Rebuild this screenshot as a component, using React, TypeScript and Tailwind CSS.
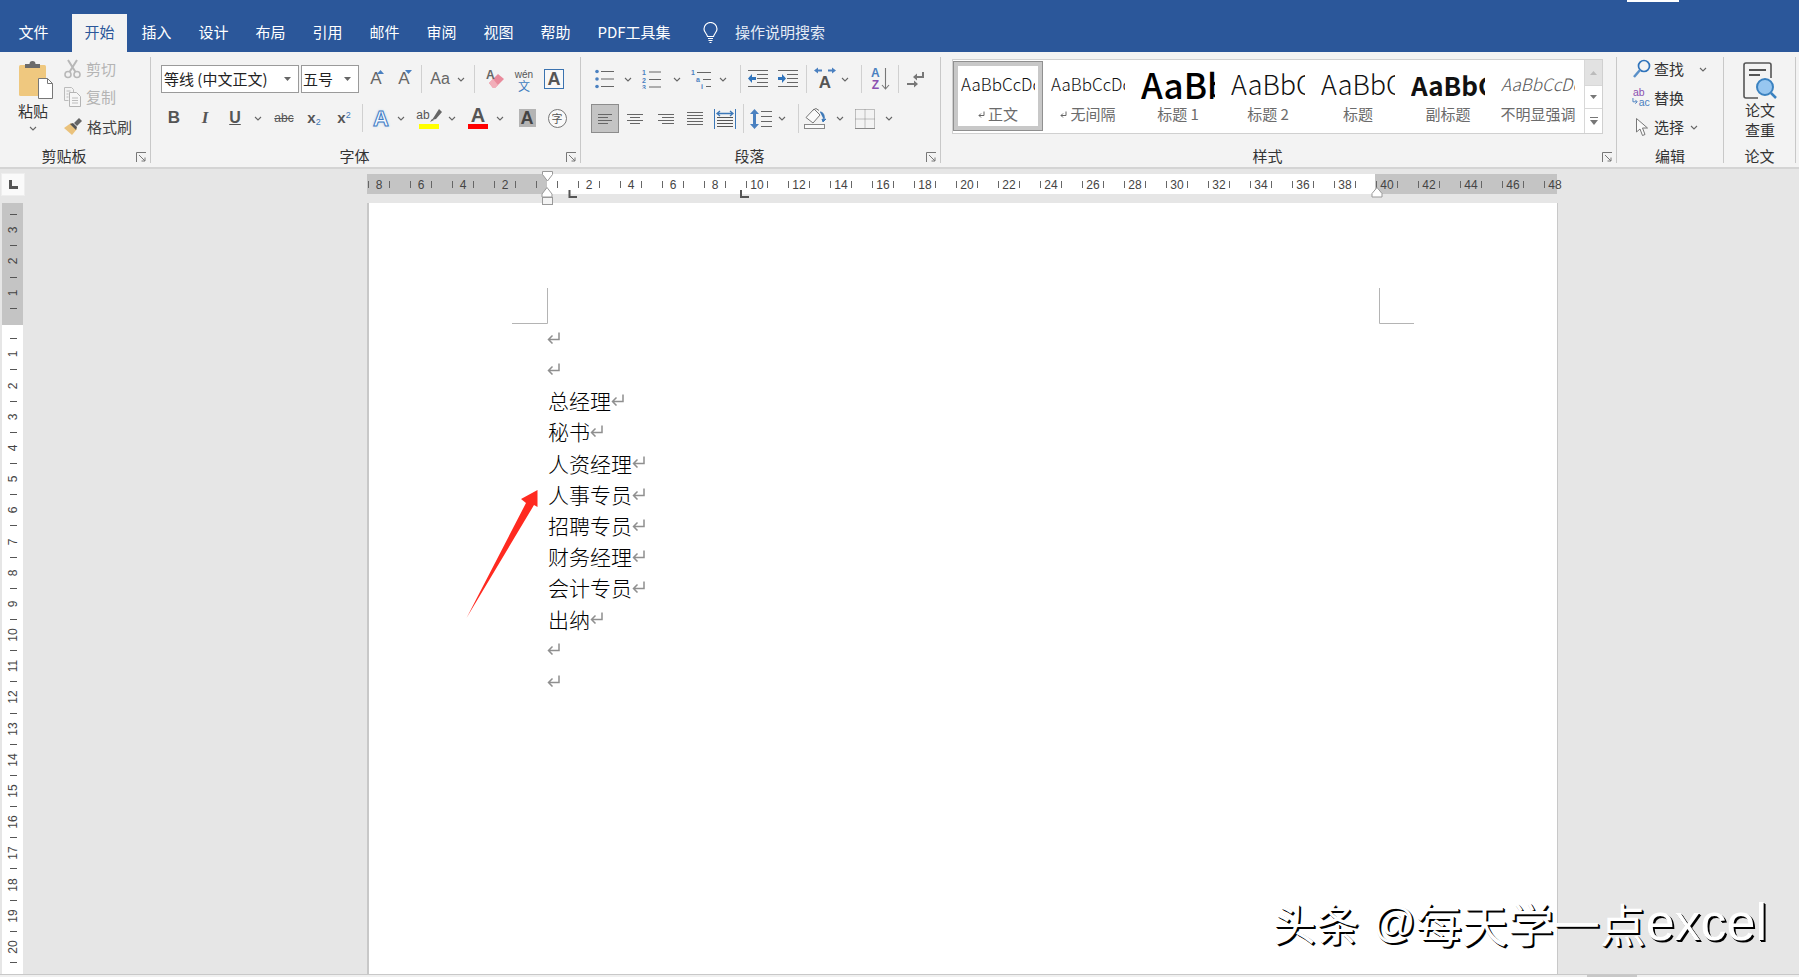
import React from "react";

const UI = "[font-family:'Noto_Sans_CJK_SC','Liberation_Sans',sans-serif]";
const AR = "[font-family:'Liberation_Sans','Noto_Sans_CJK_SC',sans-serif]";
const BLUE = "#4a80c0";

const Chev = ({ c = "#666" }: { c?: string }) => (
  <svg width="8" height="5" viewBox="0 0 8 5" className="shrink-0">
    <path d="M1 1l3 3 3-3" fill="none" stroke={c} strokeWidth="1.1" />
  </svg>
);
const Sep = () => <div className="w-px self-stretch bg-[#d0d0d0] shrink-0" />;
const Slot = ({ w, children }: { w: "s22" | "s24"; children?: React.ReactNode }) => (
  <div className={w === "s22" ? "w-[22px] h-[24px] flex items-center justify-center shrink-0" : "w-[24px] h-[24px] flex items-center justify-center shrink-0"}>
    {children}
  </div>
);
const Launcher = () => (
  <svg width="11" height="11" viewBox="0 0 11 11" className="absolute right-[3px] bottom-0">
    <path d="M.5 10V.5H10M3 3l6 6M9 5.5V9H5.5" fill="none" stroke="#777" strokeWidth="1" />
  </svg>
);
const Lines = ({ rows }: { rows: [number, number, number][] }) => (
  <svg width="22" height="18" viewBox="0 0 22 18">
    {rows.map((r, i) => (
      <path key={i} d={`M${r[0]} ${r[2]}.5H${r[1]}`} stroke="#666" strokeWidth="1" />
    ))}
  </svg>
);
const Ret = ({ c = "#8f8f8f" }: { c?: string }) => (
  <svg width="13" height="12" viewBox="0 0 13 12" className="shrink-0">
    <path d="M12 .5V7.500H1.500M5.500 3.500L1.500 7.500 5.500 11.500" fill="none" stroke={c} strokeWidth="1.5" />
  </svg>
);
const SmallRet = () => (
  <svg width="7" height="7" viewBox="0 0 7 7" className="shrink-0">
    <path d="M6 .5V4.500H1M3 2.500L1 4.500 3 6.500" fill="none" stroke="#666" strokeWidth="1" />
  </svg>
);

const Paste = () => (
  <svg width="34" height="38" viewBox="0 0 34 38">
    <rect x="0" y="4" width="27" height="31" rx="1.5" fill="#efc87f" />
    <path d="M6 7V3h4.500a3 3 0 0 1 6 0H21v4z" fill="#6b6b6b" />
    <path d="M19.500 17.500h9l5 5v15h-14z" fill="#fff" stroke="#777" />
    <path d="M28.500 17.500v5h5" fill="none" stroke="#777" />
  </svg>
);
const Scissors = () => (
  <svg width="17" height="20" viewBox="0 0 17 20">
    <circle cx="4" cy="15.500" r="3" fill="none" stroke="#b8b8b8" strokeWidth="1.6" />
    <circle cx="13" cy="15.500" r="3" fill="none" stroke="#b8b8b8" strokeWidth="1.6" />
    <path d="M5.500 13L13 1M11.500 13L4 1" stroke="#b8b8b8" strokeWidth="2" />
  </svg>
);
const Copy = () => (
  <svg width="17" height="20" viewBox="0 0 17 20">
    <path d="M.5.5h7l2 2v3M.5.5v13h4" fill="none" stroke="#bcbcbc" />
    <path d="M5.500 5.500h7l4 4v10h-11z" fill="#f6f6f6" stroke="#b4b4b4" />
    <path d="M8 11h6M8 13.500h6M8 16h6M2.500 4h4M2.500 7h2M2.500 10h2" stroke="#bcbcbc" />
  </svg>
);
const Brush = () => (
  <svg width="18" height="18" viewBox="0 0 18 18">
    <path d="M7 5l6 6-5 6-8-7z" fill="#eac27c" />
    <path d="M6 6l3-1 4 4-1 3z" fill="#555" />
    <path d="M10 5l5-5 3 3-5 5z" fill="#666" />
  </svg>
);
const GrowA = ({ up }: { up: boolean }) => (
  <div className="relative w-[24px] h-[24px] flex items-end justify-center pb-[2px]">
    <span className={`${AR} text-[17px] leading-[20px] text-[#666]`}>A</span>
    <svg width="7" height="4" viewBox="0 0 7 4" className="absolute top-[3px] right-[4px]">
      {up ? <path d="M0 4L3.500 0 7 4z" fill={BLUE} /> : <path d="M0 0L3.500 4 7 0z" fill={BLUE} />}
    </svg>
  </div>
);
const Eraser = () => (
  <div className="relative w-[22px] h-[24px]">
    <svg width="16" height="16" viewBox="0 0 16 16" className="absolute left-[6px] top-[6px]">
      <path d="M1 10L10 1l6 5-9 9H5z" fill="#e98a9b" />
      <path d="M1 10l4 5h2l3-3-5-6z" fill="#f2aeb9" />
    </svg>
    <span className={`${AR} absolute left-[4px] top-[2px] text-[12px] leading-[12px] font-bold text-[#666]`}>A</span>
  </div>
);
const Wen = () => (
  <div className="w-[22px] h-[24px] flex flex-col items-center justify-start pt-[3px]">
    <span className={`${AR} text-[10px] leading-[9px] text-[#555]`}>wén</span>
    <span className={`${UI} text-[12px] leading-[13px] text-[#3f7cbf]`}>文</span>
  </div>
);
const BoxA = () => (
  <div className="w-[20px] h-[20px] border border-[#3b73b0] flex items-center justify-center bg-[#f8f8f8]">
    <span className={`${AR} text-[18px] leading-[18px] font-bold text-[#555]`}>A</span>
  </div>
);
const Bul = () => (
  <svg width="22" height="20" viewBox="0 0 22 20">
    {[2.5, 10, 17.5].map((y) => (
      <g key={y}>
        <circle cx="3" cy={y} r="1.8" fill={BLUE} />
        <path d={`M7 ${y}H20`} stroke="#666" strokeWidth="1" />
      </g>
    ))}
  </svg>
);
const Num = () => (
  <svg width="22" height="20" viewBox="0 0 22 20">
    {["1", "2", "3"].map((t, i) => (
      <g key={t}>
        <text x="1" y={6 + i * 7.5} fontSize="7" fontWeight="700" fill={BLUE} fontFamily="Liberation Sans">{t}</text>
        <path d={`M8 ${3 + i * 7.5}H20`} stroke="#666" strokeWidth="1" />
      </g>
    ))}
  </svg>
);
const Multi = () => (
  <svg width="22" height="20" viewBox="0 0 22 20">
    <text x="0" y="6" fontSize="7" fontWeight="700" fill={BLUE} fontFamily="Liberation Sans">1</text>
    <text x="5" y="13" fontSize="7" fontWeight="700" fill={BLUE} fontFamily="Liberation Sans">a</text>
    <text x="10" y="20" fontSize="7" fontWeight="700" fill={BLUE} fontFamily="Liberation Sans">i</text>
    <path d="M6 3.500H20M12 10.500H20M15 17.500H20" stroke="#666" strokeWidth="1" />
  </svg>
);
const Indent = ({ inc }: { inc: boolean }) => (
  <svg width="22" height="18" viewBox="0 0 22 18">
    <path d="M1 .5H21M10 4.500H21M10 8.500H21M10 12.500H21M1 16.500H21" stroke="#666" strokeWidth="1" />
    {inc ? (
      <path d="M1 7h4V4l4 4.500-4 4.500V10H1z" fill="#2f73bb" />
    ) : (
      <path d="M9 7H5V4L1 8.500 5 13V10h4z" fill="#2f73bb" />
    )}
  </svg>
);
const TextDir = () => (
  <div className="relative w-[24px] h-[24px] flex items-end justify-center">
    <span className={`${AR} text-[17px] leading-[17px] font-bold text-[#555]`}>A</span>
    <svg width="24" height="7" viewBox="0 0 24 7" className="absolute top-0 left-0">
      <path d="M1 3.500L5 .5v2h4v2H5v2zM23 3.500L19 .5v2h-4v2h4v2z" fill={BLUE} />
    </svg>
  </div>
);
const Sort = () => (
  <div className="relative w-[22px] h-[24px] flex">
    <div className={`${AR} flex flex-col items-center ml-[2px] text-[12px] leading-[12px] font-bold`}>
      <span className="text-[#4a80c0]">A</span>
      <span className="text-[#8a50b0]">Z</span>
    </div>
    <svg width="9" height="24" viewBox="0 0 9 24" className="ml-[1px]">
      <path d="M4.500 1V22M1 18l3.500 4L8 18" fill="none" stroke="#777" strokeWidth="1.1" />
    </svg>
  </div>
);
const ParaMarks = () => (
  <svg width="18" height="17" viewBox="0 0 18 17">
    <path d="M16 1v5H8" fill="none" stroke="#777" strokeWidth="2" />
    <path d="M10 2.500L6 6l4 3.500zM7 12V9.500L11 13l-4 3.500V14H0v-2z" fill="#777" />
  </svg>
);
const LineSp = () => (
  <svg width="22" height="20" viewBox="0 0 22 20">
    <path d="M4.500 0L9 5H6v10h3l-4.500 5L0 15h3V5H0z" fill={BLUE} />
    <path d="M11 2.500H22M11 7.500H22M11 12.500H22M11 17.500H22" stroke="#666" />
  </svg>
);
const Distribute = () => (
  <svg width="22" height="20" viewBox="0 0 22 20">
    <path d="M.5 0V20M21.500 0V20" stroke="#3c78b8" />
    <path d="M3 4.500h16M6 2L3 4.500 6 7M16 2l3 2.500L16 7" fill="none" stroke="#3c78b8" strokeWidth="1.3" />
    <path d="M3 8.500H19M3 11.500H19M3 14.500H19M3 17.500H19" stroke="#555" />
  </svg>
);
const Fill = () => (
  <svg width="24" height="21" viewBox="0 0 24 21">
    <path d="M10 1L2 9.500 9 15l7-8z" fill="#fafafa" stroke="#777" />
    <path d="M9 2l3-1.500 3 2" fill="none" stroke="#777" />
    <path d="M16 4c3 0 5 3 4 8l-2-1 1 3 3-3-2 1" fill="#3c78b8" stroke="#3c78b8" />
    <rect x=".5" y="16.500" width="20" height="4" fill="#fafafa" stroke="#888" />
  </svg>
);
const Borders = () => (
  <svg width="20" height="20" viewBox="0 0 20 20">
    <path d="M.5.5H19.500V19.500M.5.5V19.500M10 .5V19.500M.5 10H19.500" fill="none" stroke="#888" strokeDasharray="1 1" />
    <path d="M0 19.500H20" stroke="#888" />
  </svg>
);
const SearchI = () => (
  <svg width="18" height="20" viewBox="0 0 18 20">
    <circle cx="11" cy="7" r="5.500" fill="none" stroke="#2f73bb" strokeWidth="1.7" />
    <path d="M7 11L1 18" stroke="#5a90c8" strokeWidth="2.500" />
  </svg>
);
const Replace = () => (
  <svg width="21" height="20" viewBox="0 0 21 20">
    <text x="1" y="8" fontSize="11" fill="#8a50b0" fontFamily="Liberation Sans">ab</text>
    <text x="7" y="18" fontSize="11" fill={BLUE} fontFamily="Liberation Sans">ac</text>
    <path d="M1 10v4h4M3.500 12L5.500 14 3.500 16" fill="none" stroke={BLUE} />
  </svg>
);
const Cursor = () => (
  <svg width="12" height="19" viewBox="0 0 12 19">
    <path d="M.5.5V14l3.500-3 2.500 6.500 2.500-1L6.500 10H11.500z" fill="#fafafa" stroke="#777" />
  </svg>
);
const Paper = () => (
  <svg width="34" height="37" viewBox="0 0 34 37">
    <path d="M28 16V3a2 2 0 0 0-2-2H3a2 2 0 0 0-2 2v31a2 2 0 0 0 2 2h12" fill="none" stroke="#555" strokeWidth="1.6" />
    <path d="M6 8h17M6 13h11" stroke="#555" strokeWidth="2" />
    <circle cx="22" cy="25" r="8" fill="#97c6f0" stroke="#3b82c0" strokeWidth="2" />
    <path d="M28 31l5 5" stroke="#3b82c0" strokeWidth="2.500" />
  </svg>
);
const Bulb = () => (
  <svg width="15" height="21" viewBox="0 0 15 21">
    <path d="M4.500 14.500C4 11.500 1 10.500 1 7a6.500 6.500 0 0 1 13 0c0 3.500-3 4.500-3.500 7.500z" fill="none" stroke="#fff" strokeWidth="1.2" />
    <path d="M5 16.500h5M5.500 18.500h4M6.500 20.500h2" stroke="#fff" strokeWidth="1.2" />
  </svg>
);

const Tab = ({ t, on }: { t: string; on?: boolean }) => (
  <div className="w-[57px] flex justify-center shrink-0">
    <div className={on ? "w-[55px] h-[38px] bg-[#f3f3f3] text-[#2b579a] text-center leading-[36px]" : "w-[55px] h-[38px] text-center leading-[36px] text-white"}>{t}</div>
  </div>
);

const Group = ({ cn, label, launcher, children }: { cn: string; label: string; launcher?: boolean; children: React.ReactNode }) => (
  <div className={`relative h-[106px] shrink-0 flex flex-col border-r border-[#c8c8c8] ${cn}`}>
    {children}
    <div className={launcher ? "absolute left-0 right-[22px] bottom-[1px] h-[12px] leading-[12px] text-center text-[15px] text-[#333]" : "absolute left-0 right-0 bottom-[1px] h-[12px] leading-[12px] text-center text-[15px] text-[#333]"}>{label}</div>
    {launcher && <Launcher />}
  </div>
);

const Cell = ({ n, neg, open }: { n: number; neg?: boolean; open?: boolean }) => (
  <div className={neg ? "w-[42px] -ml-[9px] shrink-0 flex items-center justify-between px-[10px]" : "w-[42px] shrink-0 flex items-center justify-between px-[10px]"}>
    <span className="w-px h-[7px] bg-[#666]" />
    <span className={`${AR} text-[12px] text-[#444] pt-[2px]`}>{n}</span>
    <span className={open ? "w-px h-[7px]" : "w-px h-[7px] bg-[#666]"} />
  </div>
);
const HalfTick = ({ right }: { right?: boolean }) => (
  <div className={right ? "w-[21px] shrink-0 flex items-center justify-start pl-[10px]" : "w-[21px] shrink-0 flex items-center justify-end pr-[10px]"}>
    <span className="w-px h-[7px] bg-[#666]" />
  </div>
);
const VTick = () => (
  <div className="h-[15.6px] shrink-0 flex items-center justify-center pl-[1px]">
    <span className="h-px w-[7px] bg-[#555]" />
  </div>
);
const VNum = ({ n }: { n: number }) => (
  <div className="h-[15.6px] shrink-0 flex items-center justify-center pl-[1px]">
    <span className={`${AR} -rotate-90 text-[12px] leading-[12px] text-[#444]`}>{n}</span>
  </div>
);

const DocLine = ({ t }: { t?: string }) => (
  <div className="h-[31.2px] flex items-center text-[21px] text-black">
    {t && <span className="font-light pt-[2px] ml-[1px]">{t}</span>}
    <span><Ret /></span>
  </div>
);

const Style = ({ label, children, first, ret }: { label: string; children: React.ReactNode; first?: boolean; ret?: boolean }) => (
  <div className={first ? "w-[90px] h-[70px] shrink-0 flex flex-col items-center border-[5px] border-[#c8c8c8] outline outline-1 -outline-offset-1 outline-[#909090] bg-white" : "w-[90px] h-[70px] shrink-0 flex flex-col items-center border-[5px] border-transparent"}>
    <div className="w-[74px] h-[36px] overflow-hidden whitespace-nowrap flex items-center shrink-0">{children}</div>
    <div className="mt-[7px] h-[10px] leading-[10px] flex items-center gap-[3px] text-[15px] text-[#6b6b6b] whitespace-nowrap">
      {ret && <SmallRet />}
      {label}
    </div>
  </div>
);

export default function App() {
  const cellsW = [2, 4, 6, 8, 10, 12, 14, 16, 18, 20, 22, 24, 26, 28, 30, 32, 34, 36, 38];
  return (
    <div className={`${UI} w-[1799px] h-[977px] overflow-hidden flex flex-col bg-[#e6e6e6] relative`}>
      {/* title + tabs */}
      <div className="h-[52px] shrink-0 bg-[#2b579a] flex flex-col">
        <div className="h-[14px] flex shrink-0">
          <div className="ml-[1627px] w-[52px] h-[2px] bg-white" />
        </div>
        <div className="flex pl-[5px] text-[15px] text-white">
          <Tab t="文件" />
          <div className="ml-[9px]"><Tab t="开始" on /></div>
          <Tab t="插入" />
          <Tab t="设计" />
          <Tab t="布局" />
          <Tab t="引用" />
          <Tab t="邮件" />
          <Tab t="审阅" />
          <Tab t="视图" />
          <Tab t="帮助" />
          <div className="ml-[13px] w-[74px] text-center leading-[36px] whitespace-nowrap">PDF工具集</div>
          <div className="ml-[32px] w-[15px] h-[36px] flex items-center"><Bulb /></div>
          <div className="ml-[17px] leading-[36px] text-[#e6ecf5]">操作说明搜索</div>
        </div>
      </div>

      {/* ribbon */}
      <div className="h-[117px] shrink-0 bg-[#f3f3f3] border-b-2 border-[#d4d4d4] pt-[5px] flex items-start">
        <Group cn="w-[151px]" label="剪贴板" launcher>
          <div className="flex">
            <div className="w-[66px] flex flex-col items-center shrink-0">
              <div className="mt-[4px] ml-[5px]"><Paste /></div>
              <div className="mt-[2px] text-[15px] leading-[20px] text-[#333]">粘贴</div>
              <div className="mt-[5px]"><Chev /></div>
            </div>
            <div className="flex flex-col text-[15px] text-[#b4b4b4] ml-[-2px] mt-[1px]">
              <div className="h-[22px] flex items-center gap-[5px]"><Scissors />剪切</div>
              <div className="mt-[6px] h-[22px] flex items-center gap-[5px]"><Copy />复制</div>
              <div className="mt-[8px] h-[22px] flex items-center gap-[5px] text-[#444]"><Brush />格式刷</div>
            </div>
          </div>
        </Group>

        <Group cn="w-[430px]" label="字体" launcher>
          <div className="flex items-center mt-[8px] h-[28px] ml-[10px]">
            <div className="w-[138px] h-[28px] border border-[#9a9a9a] bg-white flex items-center justify-between pl-[2px] pr-[7px] text-[15px] text-[#222] shrink-0">
              <span className="whitespace-nowrap">等线 (中文正文)</span>
              <svg width="7" height="4" viewBox="0 0 7 4"><path d="M0 0h7L3.500 4z" fill="#666" /></svg>
            </div>
            <div className="ml-[2px] w-[58px] h-[28px] border border-[#9a9a9a] bg-white flex items-center justify-between pl-[1px] pr-[7px] text-[15px] text-[#222] shrink-0">
              <span>五号</span>
              <svg width="7" height="4" viewBox="0 0 7 4"><path d="M0 0h7L3.500 4z" fill="#666" /></svg>
            </div>
            <div className="ml-[5px]"><GrowA up /></div>
            <div className="ml-[4px]"><GrowA up={false} /></div>
            <div className="ml-[5px] flex self-stretch"><Sep /></div>
            <div className={`${AR} ml-[6px] w-[24px] text-center text-[16px] text-[#666]`}>Aa</div>
            <div className="ml-[5px]"><Chev /></div>
            <div className="ml-[9px] flex self-stretch"><Sep /></div>
            <div className="ml-[7px]"><Eraser /></div>
            <div className="ml-[9px]"><Wen /></div>
            <div className="ml-[9px]"><BoxA /></div>
          </div>
          <div className={`${AR} flex items-center mt-[11px] h-[28px] ml-[11px] text-[#555]`}>
            <Slot w="s24"><span className="text-[17px] font-bold">B</span></Slot>
            <div className="ml-[7px]"><Slot w="s24"><span className="text-[17px] italic font-bold [font-family:'Liberation_Serif',serif]">I</span></Slot></div>
            <div className="ml-[6px]"><Slot w="s24"><span className="text-[16px] font-bold underline">U</span></Slot></div>
            <div className="ml-[7px]"><Chev /></div>
            <div className="ml-[10px]"><Slot w="s24"><span className="text-[12px] line-through">abc</span></Slot></div>
            <div className="ml-[6px]"><Slot w="s24"><span className="text-[15px] font-bold">x<sub className="text-[9px] font-normal text-[#3c78b8]">2</sub></span></Slot></div>
            <div className="ml-[6px]"><Slot w="s24"><span className="text-[15px] font-bold">x<sup className="text-[9px] font-normal text-[#3c78b8]">2</sup></span></Slot></div>
            <div className="ml-[6px] flex self-stretch"><Sep /></div>
            <div className="ml-[6px]"><Slot w="s24"><span className="text-[22px] font-bold text-[#f8fbff] [-webkit-text-stroke:1px_#3f7cc4] [text-shadow:0_0_3px_#9cc3ea]">A</span></Slot></div>
            <div className="ml-[4px]"><Chev /></div>
            <div className="ml-[12px] w-[24px] h-[24px] flex flex-col items-center">
              <div className="h-[18px] flex items-center">
                <span className="text-[12px] text-[#555]">ab</span>
                <svg width="12" height="13" viewBox="0 0 12 13"><path d="M9 0l3 3-6 7-4 1z" fill="#666" /><path d="M0 13l2-3 2 1z" fill="#666" /></svg>
              </div>
              <div className="w-[20px] h-[5px] bg-[#ffff00]" />
            </div>
            <div className="ml-[7px]"><Chev /></div>
            <div className="ml-[10px] w-[24px] h-[24px] flex flex-col items-center">
              <div className="h-[18px] flex items-center text-[20px] font-bold text-[#555]">A</div>
              <div className="w-[20px] h-[5px] bg-[#ff0000]" />
            </div>
            <div className="ml-[6px]"><Chev /></div>
            <div className="ml-[11px]"><Slot w="s24"><div className="w-[17px] h-[18px] bg-[#b4b4b4] flex items-center justify-center text-[18px] font-bold text-[#444]">A</div></Slot></div>
            <div className="ml-[6px]"><Slot w="s24"><div className={`${UI} w-[19px] h-[19px] rounded-full border border-[#777] bg-[#fafafa] flex items-center justify-center text-[11px] text-[#555]`}>字</div></Slot></div>
          </div>
        </Group>

        <Group cn="w-[360px]" label="段落" launcher>
          <div className="flex items-center mt-[8px] h-[28px] ml-[13px]">
            <Slot w="s22"><Bul /></Slot>
            <div className="ml-[8px]"><Chev /></div>
            <div className="ml-[9px]"><Slot w="s22"><Num /></Slot></div>
            <div className="ml-[10px]"><Chev /></div>
            <div className="ml-[10px]"><Slot w="s22"><Multi /></Slot></div>
            <div className="ml-[6px]"><Chev /></div>
            <div className="ml-[13px] flex self-stretch"><Sep /></div>
            <div className="ml-[6px]"><Slot w="s22"><Indent inc={false} /></Slot></div>
            <div className="ml-[8px]"><Slot w="s22"><Indent inc /></Slot></div>
            <div className="ml-[7px] flex self-stretch"><Sep /></div>
            <div className="ml-[6px]"><TextDir /></div>
            <div className="ml-[4px]"><Chev /></div>
            <div className="ml-[12px] flex self-stretch"><Sep /></div>
            <div className="ml-[7px]"><Sort /></div>
            <div className="ml-[7px] flex self-stretch"><Sep /></div>
            <div className="ml-[6px]"><Slot w="s22"><ParaMarks /></Slot></div>
          </div>
          <div className="flex items-center mt-[11px] h-[29px] ml-[10px]">
            <div className="w-[28px] h-[29px] bg-[#c4c4c4] border border-[#8c8c8c] flex items-center justify-center shrink-0">
              <Lines rows={[[4, 18, 4], [4, 14, 7], [4, 18, 10], [4, 14, 13]]} />
            </div>
            <div className="ml-[5px]"><Slot w="s22"><Lines rows={[[3, 19, 4], [6, 16, 7], [3, 19, 10], [6, 16, 13]]} /></Slot></div>
            <div className="ml-[8px]"><Slot w="s22"><Lines rows={[[4, 20, 4], [8, 20, 7], [4, 20, 10], [8, 20, 13]]} /></Slot></div>
            <div className="ml-[8px]"><Slot w="s22"><Lines rows={[[3, 19, 2], [3, 19, 5], [3, 19, 8], [3, 19, 11], [3, 19, 14]]} /></Slot></div>
            <div className="ml-[8px]"><Slot w="s22"><Distribute /></Slot></div>
            <div className="ml-[7px] flex self-stretch"><Sep /></div>
            <div className="ml-[6px]"><Slot w="s22"><LineSp /></Slot></div>
            <div className="ml-[6px]"><Chev /></div>
            <div className="ml-[12px] flex self-stretch"><Sep /></div>
            <div className="ml-[5px]"><Slot w="s24"><Fill /></Slot></div>
            <div className="ml-[8px]"><Chev /></div>
            <div className="ml-[10px]"><Slot w="s22"><Borders /></Slot></div>
            <div className="ml-[9px]"><Chev /></div>
          </div>
        </Group>

        <Group cn="w-[676px]" label="样式" launcher>
          <div className="ml-[11px] mt-[2px] w-[651px] h-[75px] border border-[#d0d0d0] bg-white flex">
            <div className="flex pt-[1px]">
              <Style first label="正文" ret><span className="text-[17px] font-light text-[#111]">AaBbCcDc</span></Style>
              <Style label="无间隔" ret><span className="text-[17px] font-light text-[#111]">AaBbCcDc</span></Style>
              <Style label="标题 1"><span className="text-[35px] font-medium text-black">AaBbCcDc</span></Style>
              <Style label="标题 2"><span className="text-[27px] font-light text-[#111]">AaBbCcDc</span></Style>
              <Style label="标题"><span className="text-[27px] font-light text-[#111]">AaBbCcDc</span></Style>
              <Style label="副标题"><span className="text-[26px] font-bold text-[#111]">AaBbCcDc</span></Style>
              <Style label="不明显强调"><span className="text-[17px] font-light italic text-[#555]">AaBbCcDc</span></Style>
            </div>
            <div className="ml-auto w-[18px] flex flex-col border-l border-[#d8d8d8]">
              <div className="h-[25px] bg-[#e2e2e2] flex items-center justify-center"><svg width="7" height="4" viewBox="0 0 7 4"><path d="M0 4h7L3.500 0z" fill="#bbb" /></svg></div>
              <div className="h-[24px] border-y border-[#d8d8d8] flex items-center justify-center"><svg width="7" height="4" viewBox="0 0 7 4"><path d="M0 0h7L3.500 4z" fill="#777" /></svg></div>
              <div className="flex-1 flex items-center justify-center"><svg width="8" height="8" viewBox="0 0 8 8"><path d="M0 .5H8" stroke="#777" /><path d="M0 3h8L4 8z" fill="#777" /></svg></div>
            </div>
          </div>
        </Group>

        <Group cn="w-[107px]" label="编辑">
          <div className="h-[24px] flex items-center ml-[15px] text-[15px] text-[#333]">
            <div className="w-[20px] flex justify-center"><SearchI /></div>
            <span className="ml-[2px]">查找</span>
            <div className="ml-[15px]"><Chev /></div>
          </div>
          <div className="h-[24px] mt-[5px] flex items-center ml-[15px] text-[15px] text-[#333]">
            <div className="w-[20px] flex justify-center"><Replace /></div>
            <span className="ml-[2px]">替换</span>
          </div>
          <div className="h-[24px] mt-[5px] flex items-center ml-[15px] text-[15px] text-[#333]">
            <div className="w-[20px] flex justify-center"><Cursor /></div>
            <span className="ml-[2px]">选择</span>
            <div className="ml-[6px]"><Chev /></div>
          </div>
        </Group>

        <Group cn="w-[72px]" label="论文">
          <div className="flex flex-col items-center mt-[5px] pl-[1px] text-[15px] leading-[20px] text-[#333]">
            <Paper />
            <div className="mt-[1px]">论文</div>
            <div>查重</div>
          </div>
        </Group>
      </div>

      {/* horizontal ruler row */}
      <div className="h-[34px] shrink-0 flex items-start pt-[4px]">
        <div className="ml-[1px] w-[24px] h-[23px] bg-[#fafafa] border border-[#eeeeee] flex items-center justify-center shrink-0">
          <svg width="9" height="9" viewBox="0 0 9 9"><path d="M1.500 0V7.500H9" fill="none" stroke="#555" strokeWidth="3" /></svg>
        </div>
        <div className="ml-[342px] mt-[1px] h-[20px] flex">
          <div className="w-[180px] h-[20px] bg-[#c4c4c4] flex justify-end overflow-hidden">
            {[8, 6, 4, 2].map((n) => <Cell key={n} n={n} />)}
            <HalfTick />
          </div>
          <div className="w-[828px] h-[20px] bg-white flex overflow-hidden">
            <HalfTick right />
            {cellsW.map((n) => <Cell key={n} n={n} />)}
          </div>
          <div className="w-[182px] h-[20px] bg-[#c4c4c4] flex">
            <Cell n={40} neg />
            {[42, 44, 46].map((n) => <Cell key={n} n={n} />)}
            <Cell n={48} open />
          </div>
        </div>
      </div>

      {/* body */}
      <div className="flex-1 min-h-0 flex">
        <div className="ml-[2px] w-[21px] shrink-0 flex flex-col overflow-hidden">
          <div className="h-[122px] shrink-0 bg-[#c4c4c4] flex flex-col justify-end overflow-hidden pb-[9px]">
            <VTick /><VNum n={3} /><VTick /><VNum n={2} /><VTick /><VNum n={1} /><VTick />
          </div>
          <div className="flex-1 bg-white flex flex-col pt-[6px] overflow-hidden">
            {Array.from({ length: 20 }, (_, i) => (
              <React.Fragment key={i}>
                <VTick />
                <VNum n={i + 1} />
              </React.Fragment>
            ))}
            <VTick />
          </div>
        </div>
        <div className="ml-[344px] w-[1191px] shrink-0 bg-white border-l-2 border-r border-[#c8c8c8] pl-[178px] pt-[119px] overflow-hidden">
          <DocLine />
          <DocLine />
          <DocLine t="总经理" />
          <DocLine t="秘书" />
          <DocLine t="人资经理" />
          <DocLine t="人事专员" />
          <DocLine t="招聘专员" />
          <DocLine t="财务经理" />
          <DocLine t="会计专员" />
          <DocLine t="出纳" />
          <DocLine />
          <DocLine />
        </div>
      </div>

      {/* bottom strip */}
      <div className="h-[3px] shrink-0 bg-[#f0f0f0] border-t border-[#c8c8c8] flex">
        <div className="ml-[1587px] w-[50px] h-full bg-[#c8c8c8]" />
      </div>

      {/* overlays: ruler markers, crop marks, arrow, watermark */}
      <svg width="1799" height="977" viewBox="0 0 1799 977" className="absolute inset-0 pointer-events-none">
        <path d="M542.500 171.500h10v3l-5 6.500-5-6.500z" fill="#fff" stroke="#999" />
        <path d="M547 187.500l5 6.500v3h-10v-3z" fill="#fff" stroke="#999" />
        <rect x="542.500" y="197.500" width="10" height="7" fill="#f4f4f4" stroke="#999" />
        <path d="M1377 187.500l5 6v3.500h-10v-3.500z" fill="#fff" stroke="#999" />
        <path d="M569.500 190v7H577M741 190v7H749" fill="none" stroke="#555" strokeWidth="2" />
        <path d="M547.500 288V323.500H512M1379.500 288V323.500H1414" fill="none" stroke="#b4b4b4" strokeWidth="1" />
        <path d="M466.500 618L526 503 521 499 537.500 490 537.500 507 534 505z" fill="#ff2a20" />
      </svg>
      <div className="absolute left-[1273px] top-[887px] h-[70px] flex items-center whitespace-nowrap text-white [text-shadow:1px_1px_0_#000,2px_2px_0_#000]">
        <span className="text-[43px]">头条</span>
        <span className={`${AR} text-[42px] ml-[14px]`}>@</span>
        <span className="text-[46px]">每天学一点</span>
        <span className={`${AR} text-[52px]`}>excel</span>
      </div>
    </div>
  );
}
